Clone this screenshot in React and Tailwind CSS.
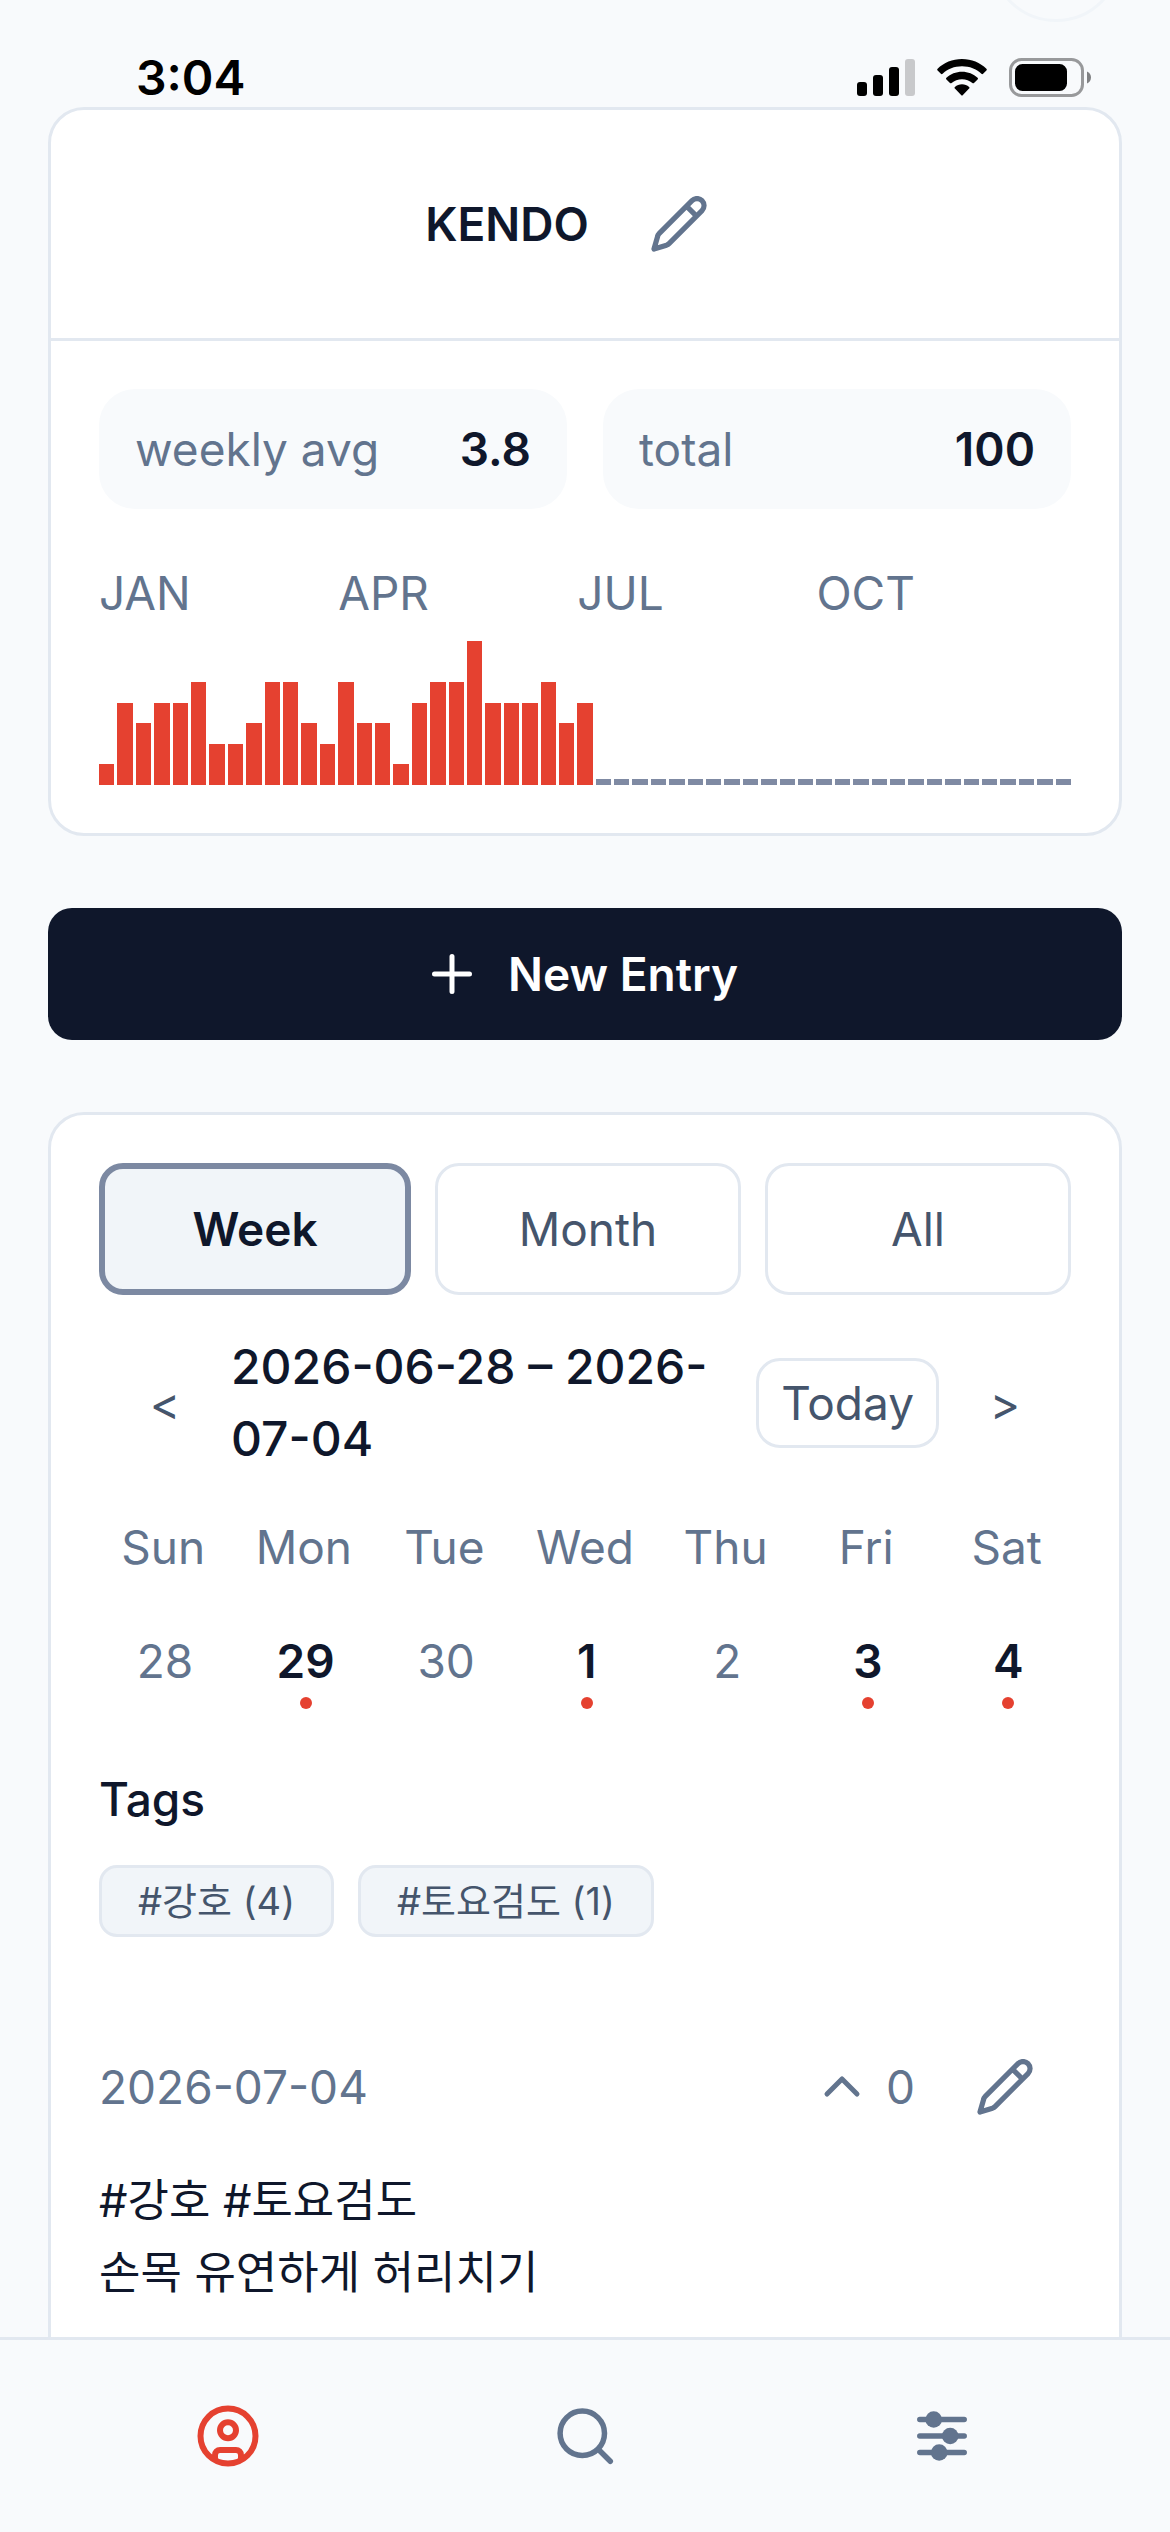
import React, { useState } from 'react';

const weekCounts = [1, 4, 3, 4, 4, 5, 2, 2, 3, 5, 5, 3, 2, 5, 3, 3, 1, 4, 5, 5, 7, 4, 4, 4, 5, 3, 4];
const WEEKS_IN_YEAR = 53;
const maxCount = Math.max(...weekCounts);

const quarters = [
  { label: 'JAN', className: 'col-start-1' },
  { label: 'APR', className: 'col-start-14' },
  { label: 'JUL', className: 'col-start-27' },
  { label: 'OCT', className: 'col-start-40' },
];

const days = [
  { name: 'Sun', date: 28, hasEntry: false },
  { name: 'Mon', date: 29, hasEntry: true },
  { name: 'Tue', date: 30, hasEntry: false },
  { name: 'Wed', date: 1, hasEntry: true },
  { name: 'Thu', date: 2, hasEntry: false },
  { name: 'Fri', date: 3, hasEntry: true },
  { name: 'Sat', date: 4, hasEntry: true },
];

const tags = [
  { name: '강호', count: 4 },
  { name: '토요검도', count: 1 },
];

const PencilIcon = () => (
  <svg viewBox="0 0 56 56" className="size-14" fill="none" stroke="currentColor" strokeWidth="5.2" strokeLinecap="round" strokeLinejoin="round" aria-hidden="true">
    <path d="M41 4.600a7.070 7.070 0 0 1 10 10L18 47.600Q17 48.600 15.500 49.200L3 53l3.600-12.500Q7 38.600 8.300 37.300ZM35.500 10.100l10 10" />
  </svg>
);

const StatusBar = () => (
  <div className="flex items-center justify-between pl-[136px] pr-[78px] pt-12 h-[107px]">
    <span className="text-[48px] leading-[60px] font-semibold text-black">3:04</span>
    <div className="flex items-center gap-[22px]">
      <svg viewBox="0 0 58 38" className="w-[58px] h-[38px]" aria-hidden="true">
        <rect x="0" y="23" width="10" height="14" rx="3" />
        <rect x="16" y="16" width="10" height="21" rx="3" />
        <rect x="32" y="8" width="10" height="29" rx="3" />
        <rect x="48" y="0" width="10" height="37" rx="3" fill="#c8c9cb" />
      </svg>
      <svg viewBox="0 0 50 37" className="w-[50px] h-[37px]" aria-hidden="true">
        <path d="M25 0C15.400 0 6.800 3.700 .6 9.700a1.200 1.200 0 0 0 0 1.700l3.300 3.300a1.200 1.200 0 0 0 1.700 0C10.600 10 17.400 7.300 25 7.300s14.400 2.700 19.400 7.400a1.200 1.200 0 0 0 1.700 0l3.300-3.300a1.200 1.200 0 0 0 0-1.700C43.200 3.700 34.600 0 25 0Z" />
        <path d="M25 12.800c-6 0-11.500 2.300-15.600 6a1.200 1.200 0 0 0 0 1.700l3.600 3.500a1.200 1.200 0 0 0 1.600 0c2.800-2.400 6.400-3.800 10.400-3.800s7.600 1.400 10.400 3.800a1.200 1.200 0 0 0 1.600 0l3.600-3.500a1.200 1.200 0 0 0 0-1.700c-4.100-3.700-9.600-6-15.600-6Z" />
        <path d="M25 25.300c-2.700 0-5.200 1-7.100 2.600a1.200 1.200 0 0 0 0 1.700l6.200 6.400a1.200 1.200 0 0 0 1.800 0l6.200-6.400a1.200 1.200 0 0 0 0-1.700c-1.900-1.600-4.400-2.600-7.100-2.600Z" />
      </svg>
      <svg viewBox="0 0 83 39" className="w-[83px] h-[39px]" aria-hidden="true">
        <rect x="1.500" y="1.500" width="72" height="36" rx="11" fill="none" stroke="#98999b" strokeWidth="3" />
        <rect x="6" y="6" width="52" height="27" rx="7.500" />
        <path d="M78 13.500c2.400 1 4 3.300 4 6s-1.600 5-4 6Z" fill="#808183" />
      </svg>
    </div>
  </div>
);

const SummaryCard = () => (
  <section className="bg-white border-[3px] border-slate-200 rounded-[36px]">
    <header className="flex items-center justify-center h-[231px] border-b-[3px] border-slate-200">
      <h1 className="font-semibold">KENDO</h1>
      <button type="button" aria-label="Edit notebook" className="flex items-center justify-center size-[132px] ml-6 text-slate-500">
        <PencilIcon />
      </button>
    </header>

    <div className="p-12">
      <dl className="grid grid-cols-2 gap-9">
        <div className="flex items-center justify-between h-[120px] px-9 rounded-[36px] bg-slate-50">
          <dt className="text-slate-500">weekly avg</dt>
          <dd className="font-semibold">3.8</dd>
        </div>
        <div className="flex items-center justify-between h-[120px] px-9 rounded-[36px] bg-slate-50">
          <dt className="text-slate-500">total</dt>
          <dd className="font-semibold">100</dd>
        </div>
      </dl>

      <div className="grid grid-cols-53 gap-[3px] mt-12 text-slate-500">
        {quarters.map((quarter) => (
          <span key={quarter.label} className={`row-start-1 ${quarter.className}`}>{quarter.label}</span>
        ))}
      </div>

      {/* One bar per week, the coming weeks stay flat */}
      <div className="grid grid-cols-53 gap-[3px] items-end h-36 mt-3">
        {Array.from({ length: WEEKS_IN_YEAR }, (_, week) => (
          week < weekCounts.length ? (
            <div key={week} className="bg-[#e54130]" style={{ height: `${(weekCounts[week] / maxCount) * 100}%` }} />
          ) : (
            <div key={week} className="h-[6px] bg-[#7f8aa3]" />
          )
        ))}
      </div>
    </div>
  </section>
);

const RangeTabs = ({ active, onChange }) => (
  <div className="flex gap-6">
    {['Week', 'Month', 'All'].map((range) => (
      <button
        key={range}
        type="button"
        onClick={() => onChange(range)}
        className={`flex-1 h-[132px] rounded-3xl
          ${active === range
            ? 'border-[6px] border-[#7c89a2] bg-slate-100 font-semibold'
            : 'border-[3px] border-slate-200 bg-white text-slate-600'}`}
      >
        {range}
      </button>
    ))}
  </div>
);

const WeekView = () => (
  <>
    <div className="flex items-center mt-9">
      <button type="button" aria-label="Previous week" className="size-[132px] shrink-0 text-slate-600">&lt;</button>
      <p className="flex-1 text-[48px] leading-[72px] font-medium">2026-06-28 – 2026-07-04</p>
      <button type="button" className="h-[90px] px-[22px] ml-9 border-[3px] border-slate-200 rounded-3xl text-slate-600">Today</button>
      <button type="button" aria-label="Next week" className="size-[132px] shrink-0 text-slate-600">&gt;</button>
    </div>

    <div className="grid grid-cols-7 gap-3 mt-9">
      {days.map((day) => (
        <span key={day.name} className="text-center text-slate-500">{day.name}</span>
      ))}
      {days.map((day) => (
        <button
          key={day.date}
          type="button"
          className={`relative size-[132px] ${day.hasEntry ? 'font-semibold' : 'text-slate-500'}`}
        >
          {day.date}
          {day.hasEntry && (
            <span className="absolute bottom-[18px] left-1/2 -translate-x-1/2 size-3 rounded-full bg-[#e54130]" />
          )}
        </button>
      ))}
    </div>
  </>
);

const Entry = () => (
  <article className="mt-[84px]">
    <div className="flex items-center h-[132px] text-slate-500">
      <time className="flex-1">2026-07-04</time>
      <button type="button" aria-label="Upvote" className="flex items-center gap-6">
        <svg viewBox="0 0 40 24" className="w-10 h-6" fill="none" stroke="currentColor" strokeWidth="5" strokeLinecap="round" strokeLinejoin="round" aria-hidden="true">
          <path d="m5 19 15-15 15 15" />
        </svg>
        0
      </button>
      <button type="button" aria-label="Edit entry" className="flex items-center justify-center size-[132px] ml-6">
        <PencilIcon />
      </button>
    </div>
    <p className="mt-3 text-[45px] leading-[72px]">
      #강호 #토요검도
      <br />
      손목 유연하게 허리치기
    </p>
  </article>
);

const BottomNav = () => (
  <nav className="fixed inset-x-0 bottom-0 flex h-[195px] px-[50px] border-t-[3px] border-slate-200 bg-slate-50 text-slate-500">
    <a href="#profile" aria-label="Profile" className="flex flex-1 items-center justify-center text-[#e54130]">
      <svg viewBox="0 0 72 72" className="size-[72px]" fill="none" stroke="currentColor" strokeWidth="6" aria-hidden="true">
        <circle cx="36" cy="36" r="27.500" />
        <circle cx="36" cy="30.300" r="8" />
        <path d="M23 60v-5a5 5 0 0 1 5-5h16a5 5 0 0 1 5 5v5" />
      </svg>
    </a>
    <a href="#search" aria-label="Search" className="flex flex-1 items-center justify-center">
      <svg viewBox="0 0 72 72" className="size-[72px]" fill="none" stroke="currentColor" strokeWidth="5.500" strokeLinecap="round" aria-hidden="true">
        <circle cx="33.300" cy="33.300" r="22.200" />
        <path d="m50 50 11.300 11.300" />
      </svg>
    </a>
    <a href="#settings" aria-label="Settings" className="flex flex-1 items-center justify-center">
      <svg viewBox="0 0 72 72" className="size-[72px]" fill="currentColor" aria-hidden="true">
        <path d="M13.800 19.500h44.400M13.800 36h44.400M13.800 52.500h44.400" stroke="currentColor" strokeWidth="5.500" strokeLinecap="round" />
        <circle cx="27.700" cy="19.500" r="8.300" />
        <circle cx="44.200" cy="36" r="8.300" />
        <circle cx="33.200" cy="52.500" r="8.300" />
      </svg>
    </a>
  </nav>
);

export default function App() {
  const [range, setRange] = useState('Week');

  return (
    <div className="relative h-screen overflow-hidden bg-slate-50 text-slate-900 text-[46px] leading-[72px] font-['Inter','Noto_Sans_CJK_KR',sans-serif]">
      <div className="absolute -top-[110px] right-12 size-[132px] rounded-full border-[3px] border-slate-100" />
      <StatusBar />

      <main className="flex flex-col gap-[72px] px-12">
        <SummaryCard />

        <button type="button" className="flex items-center justify-center gap-9 h-[132px] rounded-3xl bg-slate-900 text-white font-semibold">
          <svg viewBox="0 0 40 40" className="size-10" fill="none" stroke="currentColor" strokeWidth="5" strokeLinecap="round" aria-hidden="true">
            <path d="M20 2.500v35M2.500 20h35" />
          </svg>
          New Entry
        </button>

        <section className="p-12 pb-24 bg-white border-[3px] border-slate-200 rounded-[36px]">
          <RangeTabs active={range} onChange={setRange} />
          <WeekView />

          <h2 className="mt-9 font-medium">Tags</h2>
          <div className="flex gap-6 mt-[30px]">
            {tags.map((tag) => (
              <button key={tag.name} type="button" className="h-[72px] px-9 border-[3px] border-slate-200 rounded-[18px] bg-slate-100 text-slate-600 text-[38px] leading-[54px]">
                #{tag.name} ({tag.count})
              </button>
            ))}
          </div>

          <Entry />
        </section>
      </main>

      <BottomNav />
    </div>
  );
}
